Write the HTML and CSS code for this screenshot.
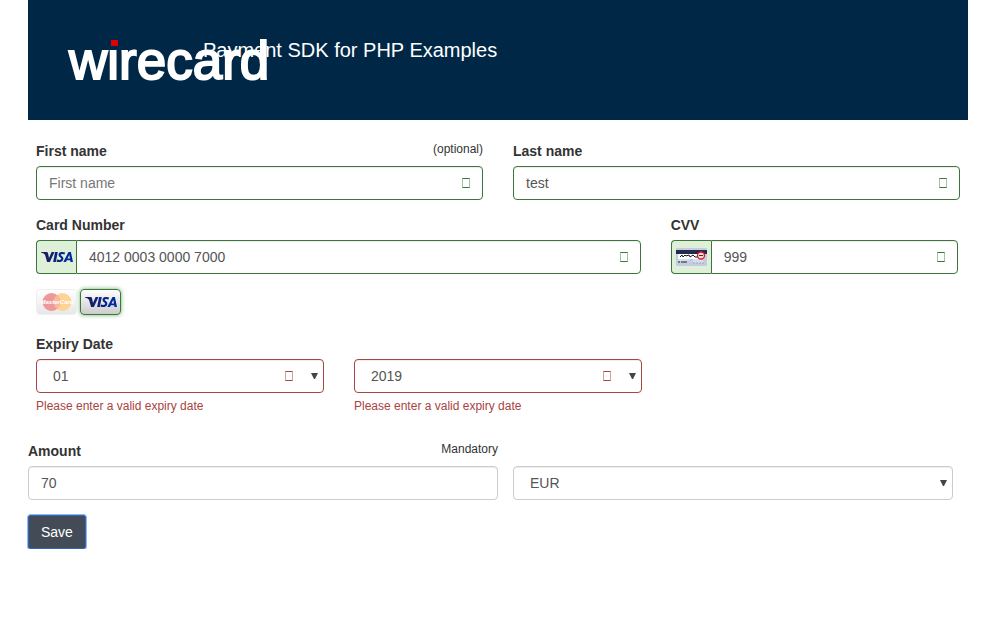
FILE: index.html
```html
<!DOCTYPE html>
<html lang="en">
<head>
  <meta charset="utf-8">
  <title>Payment SDK for PHP Examples</title>
  <link rel="stylesheet" href="styles.css">
</head>
<body>
  <div class="container">
    <header class="header">
      <svg class="logo" width="200" height="44" viewBox="0 0 200 44" role="img" aria-label="wirecard">
        <text class="logo-text" x="1" y="41">wirecard</text>
        <rect class="logo-back" x="39" y="0" width="13" height="11"/>
        <rect class="logo-dot" x="43" y="2" width="7" height="6"/>
      </svg>
      <h1 class="title">Payment SDK for PHP Examples</h1>
    </header>

    <form>
      <div class="card-form">
        <div class="row">
          <div class="field half valid">
            <div class="label-line"><label for="first">First name</label><small>(optional)</small></div>
            <div class="control"><input class="input" id="first" type="text" placeholder="First name"><span class="mark"></span></div>
          </div>
          <div class="field half valid">
            <div class="label-line"><label for="last">Last name</label></div>
            <div class="control"><input class="input" id="last" type="text" value="test"><span class="mark"></span></div>
          </div>
        </div>

        <div class="row card-row">
          <div class="field wide valid">
            <div class="label-line"><label for="number">Card Number</label></div>
            <div class="control">
              <span class="addon">
                <svg width="32" height="14" viewBox="0 0 32 14">
                  <use href="#visa"/>
                </svg>
              </span>
              <input class="input" id="number" type="text" value="4012 0003 0000 7000"><span class="mark"></span>
            </div>
          </div>
          <div class="field third valid">
            <div class="label-line"><label for="cvv">CVV</label></div>
            <div class="control">
              <span class="addon">
                <svg width="31" height="18" viewBox="0 0 31 18">
                  <rect width="31" height="18" rx="1" fill="#c3cde0"/>
                  <rect y="2" width="31" height="4" fill="#252b4d"/>
                  <rect x="2" y="6" width="20" height="5" fill="#fff"/>
                  <path d="M4 9l2-2 1 2 2-2 1 1 3-1 1 2 3-2 2 2h3" fill="none" stroke="#181818" stroke-width="1"/>
                  <path d="M2 14h2m1 0h6" stroke="#222" stroke-width="1"/>
                  <path d="M2 12h11M17 14h11M17 12h10" stroke="#e9eef7"/>
                  <path d="M17 15h11" stroke="#9ca8bd" stroke-dasharray="2 1"/>
                  <circle cx="25" cy="7.500" r="3.500" fill="#f6dede" stroke="#e31320" stroke-width="1.300"/>
                  <path d="M23 7.500h4" stroke="#333"/>
                </svg>
              </span>
              <input class="input" id="cvv" type="text" value="999"><span class="mark"></span>
            </div>
          </div>
        </div>

        <div class="brands">
          <button class="brand faded" type="button" aria-label="MasterCard">
            <svg width="32" height="20" viewBox="0 0 32 20">
              <circle cx="21.500" cy="10" r="9" fill="#ff9f16"/>
              <circle cx="10.500" cy="10" r="9" fill="#d91c22"/>
              <path d="M16 3a9 9 0 0 1 0 14a9 9 0 0 1 0-14" fill="#ef6a1d"/>
              <text class="mc-text" x="16" y="12" text-anchor="middle">MasterCard</text>
            </svg>
          </button>
          <button class="brand selected" type="button" aria-label="VISA">
            <svg width="32" height="14" viewBox="0 0 32 14">
              <defs>
                <linearGradient id="ink" x1="0" x2="1"><stop offset="0" stop-color="#1d1c55"/><stop offset="1" stop-color="#10237a"/></linearGradient>
                <g id="visa">
                  <path d="M0 2h5.500q1.200 0 1.500 1l1 5L10.600 2h2.900L8.900 12H6.100L4 4.800Q3.300 3.400 0 2.500z" fill="url(#ink)"/>
                  <path d="M14.100 2h2.700l-2 10h-2.700z" fill="#10237a"/>
                  <path d="M23.800 3.500C20.800 2.400 18.600 3.200 18.600 4.800C18.600 6.600 21.700 6.800 21.300 8.900C20.900 11.300 18 11.300 15.700 10.500" fill="none" stroke="#08258a" stroke-width="2.200"/>
                  <path d="M27.500 2h2.400L32 12h-2.500l-.3-1.700h-3.400L25 12h-2.700zm.8 3L26.500 8.500h2.500z" fill="#002ba0" fill-rule="evenodd"/>
                </g>
              </defs>
              <use href="#visa"/>
            </svg>
          </button>
        </div>

        <div class="row">
          <div class="field third invalid">
            <div class="label-line"><label for="month">Expiry Date</label></div>
            <div class="control">
              <select class="input select" id="month"><option>01</option></select><span class="mark"></span>
              <svg class="arrow" width="7" height="6" viewBox="0 0 7 6"><path d="M0 0h7L4 6H3z"/></svg>
            </div>
            <p class="help">Please enter a valid expiry date</p>
          </div>
          <div class="field third invalid">
            <div class="label-line"></div>
            <div class="control">
              <select class="input select" id="year" aria-label="Expiry year"><option>2019</option></select><span class="mark"></span>
              <svg class="arrow" width="7" height="6" viewBox="0 0 7 6"><path d="M0 0h7L4 6H3z"/></svg>
            </div>
            <p class="help">Please enter a valid expiry date</p>
          </div>
        </div>
      </div>

      <div class="amount-row">
        <div class="field">
          <div class="label-line"><label for="amount">Amount</label><small>Mandatory</small></div>
          <div class="control"><input class="input" id="amount" type="text" value="70"></div>
        </div>
        <div class="currency">
          <div class="control">
            <select class="input select" id="currency" aria-label="Currency"><option>EUR</option></select>
            <svg class="arrow" width="7" height="6" viewBox="0 0 7 6"><path d="M0 0h7L4 6H3z"/></svg>
          </div>
        </div>
      </div>
      <button class="save" type="submit">Save</button>
    </form>
  </div>
</body>
</html>
```
FILE: styles.css
```css
* {
  box-sizing: border-box;
}

body {
  margin: 0;
  background: #fff;
  color: #333;
  font: 14px/20px "Liberation Sans", Arial, sans-serif;
}

.container {
  padding: 0 28px;
}

.header {
  display: flex;
  align-items: flex-start;
  height: 120px;
  padding: 38px 40px 0;
  background: #002846;
  color: #fff;
}

/* The wordmark runs over the start of the title. */
.logo {
  position: relative;
  z-index: 1;
  flex: none;
  margin-right: -65px;
  overflow: visible;
}

.logo-text {
  font-size: 53px;
  fill: #fff;
  stroke: #fff;
  stroke-width: 2px;
}

.logo-back {
  fill: #002846;
}

.logo-dot {
  fill: #e10000;
}

.title {
  margin: 0;
  font-size: 20px;
  font-weight: 400;
  line-height: 24px;
}

.card-form {
  padding: 21px 8px 0;
}

.row {
  display: grid;
  grid-template-columns: repeat(12, 1fr);
  gap: 30px;
  margin-bottom: 15px;
}

.card-row {
  padding-right: 2px;
}

.half {
  grid-column: span 6;
}

.wide {
  grid-column: span 8;
}

.third {
  grid-column: span 4;
}

.label-line {
  display: flex;
  justify-content: space-between;
  height: 20px;
  margin-bottom: 5px;
}

label {
  font-weight: 700;
}

small {
  font-size: 12px;
  line-height: 16px;
}

.control {
  position: relative;
  display: flex;
}

.input {
  flex: 1;
  min-width: 0;
  height: 34px;
  margin: 0;
  padding: 6px 12px;
  border: 1px solid #ccc;
  border-radius: 4px;
  background: #fff;
  box-shadow: inset 0 1px 1px rgba(0, 0, 0, 0.075);
  color: #555;
  font: inherit;
}

.input::placeholder {
  color: #777;
}

.select {
  padding-left: 16px;
  appearance: none;
}

.valid .input {
  border-color: #3c763d;
}

.invalid .input {
  border-color: #a94442;
}

.addon {
  display: flex;
  align-items: center;
  justify-content: center;
  width: 40px;
  border: 1px solid #3c763d;
  border-right: 0;
  border-radius: 4px 0 0 4px;
  background: #dff0d8;
}

.addon + .input {
  border-radius: 0 4px 4px 0;
}

.mark {
  position: absolute;
  top: 12px;
  right: 13px;
  width: 8px;
  height: 10px;
  border: 1px solid #3c763d;
  border-right-color: #a5c4a5;
  border-left-color: #a5c4a5;
}

.invalid .mark {
  right: 31px;
  border-color: #a94442 #d7a3a2;
}

.arrow {
  position: absolute;
  top: 14px;
  right: 6px;
  fill: #444;
  pointer-events: none;
}

.brands {
  display: flex;
  gap: 3px;
  margin-bottom: 19px;
}

.brand {
  display: flex;
  align-items: center;
  justify-content: center;
  width: 41px;
  height: 26px;
  padding: 0;
  border: 1px solid #bbb;
  border-radius: 4px;
  background: linear-gradient(#fff, #ccc);
}

.faded {
  opacity: 0.45;
  border-color: #ddd;
}

.selected {
  border-color: #3c763d;
  box-shadow: 0 0 4px #67b168;
}

.mc-text {
  fill: #fff;
  font-size: 6px;
  font-style: italic;
  font-weight: 700;
}

.help {
  margin: 3px 0 0;
  color: #a94442;
  font-size: 12px;
}

.amount-row {
  display: grid;
  grid-template-columns: 1fr 1fr;
  align-items: end;
  padding-top: 10px;
  margin-bottom: 15px;
}

.currency {
  padding: 0 15px;
}

.save {
  height: 34px;
  padding: 6px 12px;
  border: 1px solid #3567b5;
  border-radius: 2px;
  outline: 1px solid #8db8f5;
  background: #434c56;
  color: #fff;
  font: inherit;
}
```
